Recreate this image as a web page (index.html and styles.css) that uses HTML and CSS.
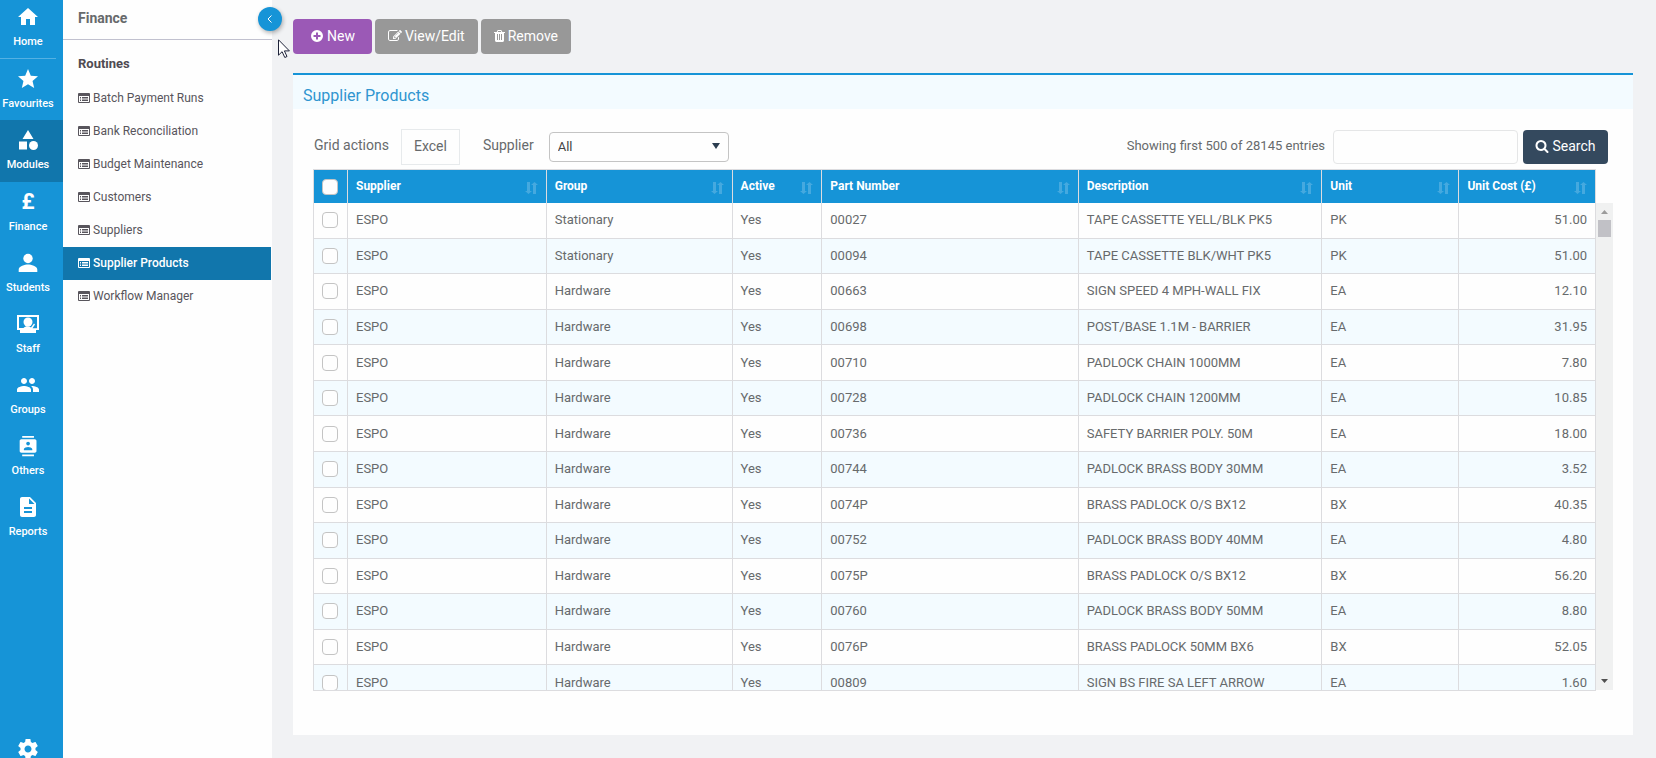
FILE: index.html
```html
<!DOCTYPE html>
<html lang="en">
<head>
<meta charset="utf-8">
<title>Supplier Products</title>
<link rel="stylesheet" href="styles.css">
</head>
<body>
<svg class="sprite" aria-hidden="true">
  <symbol id="i-list" viewBox="0 0 12 10"><path fill-rule="evenodd" d="M1 0h10a1 1 0 0 1 1 1v8a1 1 0 0 1-1 1H1a1 1 0 0 1-1-1V1a1 1 0 0 1 1-1zM1 3v6h10V3zM2 4h1v1H2zM4 4h6v1H4zM2 5.500h1v1H2zM4 5.500h6v1H4zM2 7h1v1H2zM4 7h6v1H4z"/></symbol>
  <symbol id="i-sort" viewBox="0 0 13 12"><path d="M2 0h3v9h2L3.500 12 0 9h2zM8 12h3V3h2L9.500 0 6 3h2z"/></symbol>
</svg>
<div class="app">
  <nav class="rail" aria-label="Main">
    <a class="rail-item rail-home" href="#"><svg class="rail-icon" viewBox="0 0 24 24"><path d="M10 20v-6h4v6h5v-8h3L12 3 2 12h3v8z"/></svg><span>Home</span></a>
    <a class="rail-item" href="#"><svg class="rail-icon" viewBox="0 0 24 24"><path d="M12 17.270L18.180 21l-1.640-7.030L22 9.240l-7.190-.61L12 2 9.190 8.630 2 9.240l5.460 4.730L5.820 21z"/></svg><span>Favourites</span></a>
    <a class="rail-item active" href="#"><svg class="rail-icon" viewBox="0 0 24 24"><path d="M12 2l5.500 9h-11zM3 13.500h8v8H3z"/><circle cx="17.500" cy="17.500" r="4.500"/></svg><span>Modules</span></a>
    <a class="rail-item" href="#"><b class="rail-icon pound">£</b><span>Finance</span></a>
    <a class="rail-item" href="#"><svg class="rail-icon" viewBox="0 0 24 24"><circle cx="12" cy="7.500" r="4.700"/><path d="M12 13.500c-3 0-9.300 1.500-9.300 5V21h18.600v-2.500c0-3.500-6.300-5-9.300-5z"/></svg><span>Students</span></a>
    <a class="rail-item" href="#"><svg class="rail-icon" viewBox="0 0 24 24"><path fill-rule="evenodd" d="M1 3h22v15h-3v3H4v-3H1zM3 5v11h4.500c1-1.200 2.500-1.800 4-1.800 1.300 0 2.500.4 3.500 1.200l3-4 1 1-2.500 3.800H21V5z"/><circle cx="12" cy="10" r="4.500"/></svg><span>Staff</span></a>
    <a class="rail-item" href="#"><svg class="rail-icon" viewBox="0 0 24 24"><path d="M16 11c1.660 0 2.990-1.340 2.990-3S17.660 5 16 5s-3 1.340-3 3 1.340 3 3 3zm-8 0c1.660 0 2.990-1.340 2.990-3S9.660 5 8 5 5 6.340 5 8s1.340 3 3 3zm0 2c-2.330 0-7 1.170-7 3.500V19h14v-2.500c0-2.330-4.670-3.500-7-3.500zm8 0c-.29 0-.62.020-.97.050 1.160.84 1.970 1.970 1.970 3.450V19h6v-2.500c0-2.330-4.670-3.500-7-3.500z"/></svg><span>Groups</span></a>
    <a class="rail-item" href="#"><svg class="rail-icon" viewBox="0 0 24 24"><path d="M19 2H5V0h14zM5 24h14v-2H5zM20 4H4c-1.100 0-2 .9-2 2v12c0 1.100.9 2 2 2h16c1.100 0 2-.9 2-2V6c0-1.100-.9-2-2-2zm-8 2.750c1.240 0 2.250 1.010 2.250 2.250s-1.010 2.250-2.250 2.250S9.750 10.240 9.750 9 10.760 6.750 12 6.750zM17 17H7v-1.500c0-1.670 3.330-2.500 5-2.500s5 .83 5 2.500z" transform="translate(2 2) scale(.84)"/></svg><span>Others</span></a>
    <a class="rail-item" href="#"><svg class="rail-icon" viewBox="0 0 24 24"><path d="M14 2H6c-1.100 0-2 .9-2 2v16c0 1.100.9 2 2 2h12c1.100 0 2-.9 2-2V8zm2 16H8v-2h8zm0-4H8v-2h8zm-3-5V3.500L18.500 9z"/></svg><span>Reports</span></a>
    <a class="rail-settings" href="#" aria-label="Settings"><svg class="rail-icon" viewBox="0 0 24 24"><path d="M19.430 12.980c.04-.32.070-.64.070-.98s-.03-.66-.07-.98l2.110-1.650c.19-.15.24-.42.120-.64l-2-3.460c-.12-.22-.39-.3-.61-.22l-2.490 1c-.52-.4-1.080-.73-1.690-.98l-.38-2.650C14.460 2.180 14.250 2 14 2h-4c-.25 0-.46.18-.49.420l-.38 2.650c-.61.25-1.170.59-1.690.98l-2.490-1c-.23-.09-.49 0-.61.22l-2 3.460c-.13.22-.07.49.12.640l2.110 1.650c-.04.320-.07.650-.07.980s.03.660.07.980l-2.110 1.650c-.19.150-.24.420-.12.640l2 3.460c.12.220.39.300.61.220l2.490-1c.52.400 1.080.730 1.690.980l.38 2.650c.03.240.24.420.49.420h4c.25 0 .46-.18.49-.42l.38-2.650c.61-.25 1.170-.59 1.690-.98l2.490 1c.23.090.49 0 .61-.22l2-3.460c.12-.22.07-.49-.12-.64zM12 15.500c-1.930 0-3.500-1.570-3.500-3.500s1.570-3.500 3.500-3.500 3.500 1.570 3.500 3.500-1.570 3.500-3.500 3.500z"/></svg></a>
  </nav>

  <aside class="panel">
    <h2 class="panel-title">Finance</h2>
    <h3 class="panel-group">Routines</h3>
    <ul class="menu">
      <li><a href="#"><svg class="list-icon"><use href="#i-list"/></svg>Batch Payment Runs</a></li>
      <li><a href="#"><svg class="list-icon"><use href="#i-list"/></svg>Bank Reconciliation</a></li>
      <li><a href="#"><svg class="list-icon"><use href="#i-list"/></svg>Budget Maintenance</a></li>
      <li><a href="#"><svg class="list-icon"><use href="#i-list"/></svg>Customers</a></li>
      <li><a href="#"><svg class="list-icon"><use href="#i-list"/></svg>Suppliers</a></li>
      <li><a class="current" href="#"><svg class="list-icon"><use href="#i-list"/></svg>Supplier Products</a></li>
      <li><a href="#"><svg class="list-icon"><use href="#i-list"/></svg>Workflow Manager</a></li>
    </ul>
    <button class="collapse" type="button" aria-label="Collapse menu"><svg viewBox="0 0 6 8"><path d="M4.500 .5L1 4l3.500 3.500"/></svg></button>
  </aside>

  <main class="main">
    <div class="actions">
      <button class="btn btn-new" type="button"><svg class="btn-icon" viewBox="0 0 14 14"><path fill-rule="evenodd" d="M7 1a6 6 0 1 0 0 12A6 6 0 0 0 7 1zM6 3.500h2V6h2.500v2H8v2.500H6V8H3.500V6H6z"/></svg>New</button>
      <button class="btn" type="button"><svg class="btn-icon" viewBox="0 0 1792 1792"><path d="M888 1184l116-116-152-152-116 116v56h96v96h56zm440-720q-16-16-33 1l-350 350q-17 17-1 33t33-1l350-350q17-17 1-33zm80 594v190q0 119-84.500 203.500t-203.500 84.500h-832q-119 0-203.500-84.500t-84.500-203.500v-832q0-119 84.500-203.500t203.500-84.500h832q63 0 117 25 15 7 18 23 3 17-9 29l-49 49q-14 14-32 8-23-6-45-6h-832q-66 0-113 47t-47 113v832q0 66 47 113t113 47h832q66 0 113-47t47-113v-126q0-13 9-22l64-64q15-15 35-7t20 29zm-96-738l288 288-672 672h-288v-288zm444 132l-92 92-288-288 92-92q28-28 68-28t68 28l152 152q28 28 28 68t-28 68z"/></svg>View/Edit</button>
      <button class="btn" type="button"><svg class="btn-icon btn-icon-narrow" viewBox="192 0 1408 1792"><path d="M704 1376v-704q0-14-9-23t-23-9h-64q-14 0-23 9t-9 23v704q0 14 9 23t23 9h64q14 0 23-9t9-23zm256 0v-704q0-14-9-23t-23-9h-64q-14 0-23 9t-9 23v704q0 14 9 23t23 9h64q14 0 23-9t9-23zm256 0v-704q0-14-9-23t-23-9h-64q-14 0-23 9t-9 23v704q0 14 9 23t23 9h64q14 0 23-9t9-23zm-544-992h448l-48-117q-7-9-17-11h-317q-10 2-17 11zm928 32v64q0 14-9 23t-23 9h-96v948q0 83-47 143.500t-113 60.500h-832q-66 0-113-58.500t-47-141.500v-952h-96q-14 0-23-9t-9-23v-64q0-14 9-23t23-9h309l70-167q15-37 54-63t79-26h320q40 0 79 26t54 63l70 167h309q14 0 23 9t9 23z"/></svg>Remove</button>
    </div>

    <section class="box">
      <h1 class="box-title">Supplier Products</h1>
      <div class="box-body">
        <div class="toolbar">
          <span class="toolbar-label">Grid actions</span>
          <button class="excel" type="button">Excel</button>
          <label class="toolbar-label supplier-label" for="supplier">Supplier</label>
          <span class="select-wrap">
            <select id="supplier"><option>All</option></select>
            <svg class="caret" viewBox="0 0 8 6"><path d="M0 0h8L4 6z"/></svg>
          </span>
          <label class="entries" for="query">Showing first 500 of 28145 entries</label>
          <input class="query" id="query" type="text">
          <button class="search" type="button"><svg class="btn-icon" viewBox="0 0 1792 1792"><path d="M1216 832q0-185-131.500-316.500t-316.500-131.500-316.500 131.500-131.500 316.500 131.500 316.500 316.500 131.500 316.500-131.500 131.500-316.500zm512 832q0 52-38 90t-90 38q-54 0-90-38l-343-342q-179 124-399 124-143 0-273.500-55.500t-225-150-150-225-55.500-273.500 55.500-273.500 150-225 225-150 273.500-55.500 273.500 55.500 225 150 150 225 55.500 273.500q0 220-124 399l343 343q37 37 37 90z"/></svg>Search</button>
        </div>

        <div class="grid-area">
          <div class="grid-clip">
            <table class="grid">
              <colgroup><col class="c-check"><col class="c-supplier"><col class="c-group"><col class="c-active"><col class="c-part"><col class="c-desc"><col class="c-unit"><col></colgroup>
              <thead>
                <tr>
                  <th><input type="checkbox" aria-label="Select all"></th>
                  <th><div class="head">Supplier<svg class="sort"><use href="#i-sort"/></svg></div></th>
                  <th><div class="head">Group<svg class="sort"><use href="#i-sort"/></svg></div></th>
                  <th><div class="head">Active<svg class="sort"><use href="#i-sort"/></svg></div></th>
                  <th><div class="head">Part Number<svg class="sort"><use href="#i-sort"/></svg></div></th>
                  <th><div class="head">Description<svg class="sort"><use href="#i-sort"/></svg></div></th>
                  <th><div class="head">Unit<svg class="sort"><use href="#i-sort"/></svg></div></th>
                  <th><div class="head">Unit Cost (£)<svg class="sort"><use href="#i-sort"/></svg></div></th>
                </tr>
              </thead>
              <tbody>
                <tr><td><input type="checkbox" aria-label="Select 00027"></td><td>ESPO</td><td>Stationary</td><td>Yes</td><td>00027</td><td>TAPE CASSETTE YELL/BLK PK5</td><td>PK</td><td>51.00</td></tr>
                <tr><td><input type="checkbox" aria-label="Select 00094"></td><td>ESPO</td><td>Stationary</td><td>Yes</td><td>00094</td><td>TAPE CASSETTE BLK/WHT PK5</td><td>PK</td><td>51.00</td></tr>
                <tr><td><input type="checkbox" aria-label="Select 00663"></td><td>ESPO</td><td>Hardware</td><td>Yes</td><td>00663</td><td>SIGN SPEED 4 MPH-WALL FIX</td><td>EA</td><td>12.10</td></tr>
                <tr><td><input type="checkbox" aria-label="Select 00698"></td><td>ESPO</td><td>Hardware</td><td>Yes</td><td>00698</td><td>POST/BASE 1.1M - BARRIER</td><td>EA</td><td>31.95</td></tr>
                <tr><td><input type="checkbox" aria-label="Select 00710"></td><td>ESPO</td><td>Hardware</td><td>Yes</td><td>00710</td><td>PADLOCK CHAIN 1000MM</td><td>EA</td><td>7.80</td></tr>
                <tr><td><input type="checkbox" aria-label="Select 00728"></td><td>ESPO</td><td>Hardware</td><td>Yes</td><td>00728</td><td>PADLOCK CHAIN 1200MM</td><td>EA</td><td>10.85</td></tr>
                <tr><td><input type="checkbox" aria-label="Select 00736"></td><td>ESPO</td><td>Hardware</td><td>Yes</td><td>00736</td><td>SAFETY BARRIER POLY. 50M</td><td>EA</td><td>18.00</td></tr>
                <tr><td><input type="checkbox" aria-label="Select 00744"></td><td>ESPO</td><td>Hardware</td><td>Yes</td><td>00744</td><td>PADLOCK BRASS BODY 30MM</td><td>EA</td><td>3.52</td></tr>
                <tr><td><input type="checkbox" aria-label="Select 0074P"></td><td>ESPO</td><td>Hardware</td><td>Yes</td><td>0074P</td><td>BRASS PADLOCK O/S BX12</td><td>BX</td><td>40.35</td></tr>
                <tr><td><input type="checkbox" aria-label="Select 00752"></td><td>ESPO</td><td>Hardware</td><td>Yes</td><td>00752</td><td>PADLOCK BRASS BODY 40MM</td><td>EA</td><td>4.80</td></tr>
                <tr><td><input type="checkbox" aria-label="Select 0075P"></td><td>ESPO</td><td>Hardware</td><td>Yes</td><td>0075P</td><td>BRASS PADLOCK O/S BX12</td><td>BX</td><td>56.20</td></tr>
                <tr><td><input type="checkbox" aria-label="Select 00760"></td><td>ESPO</td><td>Hardware</td><td>Yes</td><td>00760</td><td>PADLOCK BRASS BODY 50MM</td><td>EA</td><td>8.80</td></tr>
                <tr><td><input type="checkbox" aria-label="Select 0076P"></td><td>ESPO</td><td>Hardware</td><td>Yes</td><td>0076P</td><td>BRASS PADLOCK 50MM BX6</td><td>BX</td><td>52.05</td></tr>
                <tr><td><input type="checkbox" aria-label="Select 00809"></td><td>ESPO</td><td>Hardware</td><td>Yes</td><td>00809</td><td>SIGN BS FIRE SA LEFT ARROW</td><td>EA</td><td>1.60</td></tr>
              </tbody>
            </table>
          </div>
          <div class="scrollbar" aria-hidden="true">
            <svg class="arrow arrow-up" viewBox="0 0 7 4"><path d="M0 4h7L3.500 0z"/></svg>
            <span class="thumb"></span>
            <svg class="arrow arrow-down" viewBox="0 0 7 4"><path d="M0 0h7L3.500 4z"/></svg>
          </div>
        </div>
      </div>
    </section>
  </main>
  <svg class="pointer" viewBox="0 0 12 19" aria-hidden="true"><path d="M.5 .8v15.400l3.600-3.500 2.700 5.800 2.200-1-2.600-5.600h5z"/></svg>
</div>
</body>
</html>
```

FILE: styles.css
```css
* { box-sizing: border-box; }

body {
  margin: 0;
  font-family: Roboto, "Liberation Sans", sans-serif;
  font-size: 13px;
  color: #676a6c;
  background: #f1f2f4;
}

button, input, select { font-family: inherit; margin: 0; }
a { color: inherit; text-decoration: none; }
.sprite { display: none; }

.app {
  display: flex;
  position: relative;
  height: 100vh;
  overflow: hidden;
}

/* Icon rail */
.rail {
  display: flex;
  flex-direction: column;
  flex: none;
  width: 63px;
  overflow: hidden;
  background: #1694d7;
  color: #fff;
}

.rail-item {
  display: flex;
  flex: none;
  flex-direction: column;
  align-items: center;
  gap: 4px;
  height: 61px;
  padding: 8px 7px 0 0;
  font-size: 11px;
  font-weight: 500;
  line-height: 18px;
}

.rail-home {
  height: 59px;
  margin-right: 7px;
  padding: 5px 0 0;
  border-bottom: 1px solid #54b1e3;
}

.rail-item.active { height: 62px; background: #1176ac; }

.rail-icon {
  display: block;
  flex: none;
  width: 24px;
  height: 24px;
  fill: currentColor;
}

.pound {
  font-size: 22px;
  line-height: 24px;
  text-align: center;
}

.rail-settings {
  display: flex;
  flex: none;
  justify-content: center;
  margin-top: auto;
  margin-bottom: -3px;
  padding-right: 7px;
}

/* Module menu */
.panel {
  position: relative;
  flex: none;
  width: 209px;
  background: #fefefe;
}

.panel-title {
  margin: 0;
  padding: 10px 15px 13px;
  border-bottom: 1px solid #c1c1cf;
  font-size: 14px;
  line-height: 16px;
}

.panel-group {
  margin: 0;
  padding: 16px 15px 10px;
  color: #4f4b52;
  font-size: 13px;
  line-height: 16px;
}

.menu {
  margin: 0 1px 0 0;
  padding: 0;
  list-style: none;
  font-size: 12px;
}

.menu a {
  display: flex;
  align-items: center;
  gap: 3px;
  height: 33px;
  padding: 0 0 2px 15px;
  color: #58555c;
}

.menu .current {
  background: #1176ac;
  color: #fff;
  font-weight: 500;
}

.list-icon { width: 12px; height: 10px; fill: currentColor; }

.collapse {
  display: flex;
  position: absolute;
  top: 7px;
  right: -10px;
  align-items: center;
  justify-content: center;
  width: 24px;
  height: 24px;
  padding: 0;
  border: 0;
  border-radius: 50%;
  background: #1694d7;
  box-shadow: 1px 2px 4px rgba(0, 0, 0, .3);
}

.collapse svg {
  width: 6px;
  height: 8px;
  fill: none;
  stroke: #fff;
}

/* Main column */
.main {
  display: flex;
  flex: 1;
  flex-direction: column;
  min-width: 0;
  padding: 19px 23px 23px 21px;
}

.actions { display: flex; gap: 3px; margin-bottom: 19px; }

.btn, .search {
  display: flex;
  align-items: center;
  justify-content: center;
  gap: 3px;
  height: 35px;
  padding: 0 13px 2px;
  border: 0;
  border-radius: 4px;
  background: #989898;
  color: #fff;
  font-size: 14px;
}

.btn-new { padding: 0 17px 2px; background: #9b59b6; }

.btn-icon { width: 14px; height: 14px; fill: currentColor; }
.btn-icon-narrow { width: 11px; }

.box {
  display: flex;
  flex: 1;
  flex-direction: column;
  min-height: 0;
  border-top: 2px solid #1694d7;
  background: #fefefe;
}

.box-title {
  margin: 0;
  padding: 14px 10px 6px;
  background: #f3fbff;
  color: #2f95d0;
  font-size: 16px;
  font-weight: 400;
  line-height: 14px;
}

.box-body {
  display: flex;
  flex: 1;
  flex-direction: column;
  min-height: 0;
  padding: 20px 20px 44px;
}

.toolbar {
  display: flex;
  align-items: center;
  height: 36px;
  margin-right: 5px;
  margin-bottom: 4px;
}

.toolbar-label { margin-left: 1px; padding-bottom: 4px; font-size: 14px; }
.supplier-label { margin-left: 23px; }

.excel {
  width: 59px;
  height: 36px;
  margin-left: 12px;
  padding: 0 0 2px;
  border: 1px solid #e7eaec;
  background: #fefefe;
  color: #676a6c;
  font-size: 14px;
}

.select-wrap {
  position: relative;
  width: 180px;
  margin-left: 15px;
}

.select-wrap select {
  display: block;
  width: 100%;
  height: 30px;
  padding: 0 8px 2px;
  border: 1px solid #c4c4c4;
  border-radius: 4px;
  appearance: none;
  background: #fefefe;
  color: #444;
  font-size: 13px;
}

.caret {
  position: absolute;
  top: 11px;
  right: 9px;
  width: 8px;
  height: 6px;
  fill: #2c3e50;
  pointer-events: none;
}

.entries { margin-left: auto; padding-bottom: 4px; }

.query {
  width: 185px;
  height: 34px;
  margin: 0 5px 0 8px;
  border: 1px solid #e5e6e7;
  border-radius: 4px;
  background: #fefefe;
}

.search {
  width: 85px;
  height: 34px;
  padding: 0 0 2px;
  background: #34495e;
}

/* Data grid */
.grid-area {
  display: flex;
  flex: 1;
  min-height: 0;
}

.grid-clip {
  flex: 1;
  min-width: 0;
  overflow: hidden;
  border-bottom: 1px solid #dcdcdf;
}

.grid {
  width: 100%;
  height: 532px;
  border-top: 1px solid #dcdcdf;
  border-left: 1px solid #dcdcdf;
  border-spacing: 0;
  table-layout: fixed;
}

.c-check { width: 34px; }
.c-supplier { width: 15.5%; }
.c-group { width: 14.5%; }
.c-active { width: 7%; }
.c-part { width: 20%; }
.c-desc { width: 19%; }
.c-unit { width: 10.7%; }

.grid th {
  height: 33px;
  padding: 0 8px;
  border-right: 1px solid #dcdcdf;
  background: #1694d7;
  color: #fff;
  font-size: 12px;
  line-height: 16px;
  text-align: left;
}

.head {
  display: flex;
  align-items: flex-end;
  justify-content: space-between;
  padding-bottom: 2px;
}

.sort { width: 13px; height: 12px; fill: #45a9df; }

.grid td {
  padding: 0 8px;
  border-right: 1px solid #dcdcdf;
  border-bottom: 1px solid #dcdcdf;
  line-height: 16px;
  white-space: nowrap;
}

.grid tbody tr:nth-child(even) { background: #f3fbff; }
.grid td:last-child { text-align: right; }

.grid input {
  display: block;
  width: 16px;
  height: 16px;
  border: 1px solid #c4c4c4;
  border-radius: 4px;
  appearance: none;
  background: #fefefe;
}

.scrollbar {
  display: flex;
  flex: none;
  flex-direction: column;
  align-items: center;
  width: 17px;
  margin: 34px 0 1px;
  padding: 7px 0;
  background: #f0f1f1;
}

.arrow { width: 7px; height: 4px; fill: #9b9b9b; }
.arrow-down { margin-top: auto; fill: #505050; }
.thumb { width: 13px; height: 17px; margin-top: 6px; background: #c1c1c6; }

.pointer {
  position: absolute;
  top: 39px;
  left: 278px;
  width: 12px;
  height: 19px;
  fill: #fff;
  stroke: #1d2238;
}
```
